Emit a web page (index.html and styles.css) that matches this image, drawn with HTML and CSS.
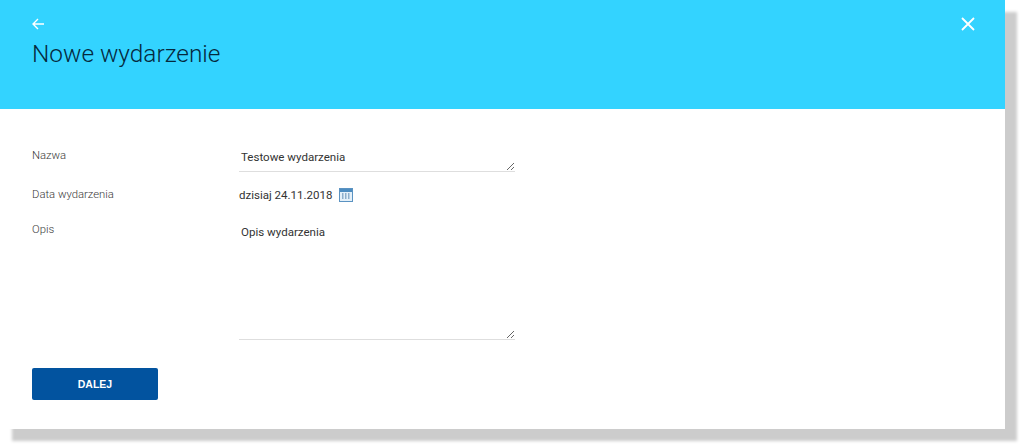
FILE: index.html
```html
<!DOCTYPE html>
<html lang="pl">
<head>
<meta charset="utf-8">
<title>Nowe wydarzenie</title>
<link rel="stylesheet" href="styles.css">
</head>
<body>
<main class="card">
  <header class="head">
    <div class="head-icons">
      <svg class="icon" width="14" height="14" viewBox="0 0 14 14"><path d="M13 7H2M7 2 2 7l5 5" fill="none" stroke="#fff" stroke-width="1.4"/></svg>
      <svg class="icon" width="14" height="14" viewBox="0 0 14 14"><path d="M1 1l12 12M13 1 1 13" fill="none" stroke="#fff" stroke-width="1.8"/></svg>
    </div>
    <h1 class="title">Nowe wydarzenie</h1>
  </header>
  <form class="form">
    <div class="row row-name">
      <label class="label">Nazwa</label>
      <textarea class="field field-name">Testowe wydarzenia</textarea>
    </div>
    <div class="row row-date">
      <label class="label">Data wydarzenia</label>
      <div class="date">
        <span>dzisiaj 24.11.2018</span>
        <svg width="14" height="14" viewBox="0 0 14 14"><rect x=".5" y=".5" width="13" height="13" fill="#e4f0f9" stroke="#5b93c2"/><rect x="1" y="1" width="12" height="3" fill="#4d8cc0"/><path d="M3 6h2M6 6h2M9 6h2M3 8h2M6 8h2M9 8h2M3 10h2M6 10h2M9 10h2" stroke="#3a6f9e" stroke-dasharray="1 .5"/></svg>
      </div>
    </div>
    <div class="row row-desc">
      <label class="label">Opis</label>
      <textarea class="field field-desc">Opis wydarzenia</textarea>
    </div>
    <button class="next" type="button">DALEJ</button>
  </form>
</main>
</body>
</html>
```
FILE: styles.css
```css
html, body { margin: 0; padding: 0; background: #fff; }
body { width: 1024px; height: 448px; overflow: hidden; font-family: Roboto, sans-serif; }
.card { width: 1005px; height: 429px; background: #fff; box-shadow: 12px 12px 3px #ccc; }
.head { height: 109px; background: #33d3ff; padding: 17px 30px 0 31px; box-sizing: border-box; }
.head-icons { display: flex; justify-content: space-between; height: 14px; }
.icon { display: block; }
.title { margin: 8px 0 0 1px; font-size: 24.4px; line-height: 30px; font-weight: 300; color: #05293d; }
.form { padding: 28px 0 0 32px; }
.row { display: flex; }
.label { width: 207px; flex: none; font-size: 11.3px; font-weight: 300; color: #3a3a3a; line-height: 20px; padding-top: 9px; box-sizing: border-box; }
.field { display: block; width: 276px; margin: 0; padding: 11px 2px 0; box-sizing: border-box; border: 0; border-bottom: 1px solid #dedede; outline: 0; font-family: Roboto, sans-serif; font-size: 11.55px; line-height: 18px; color: #333; background: #fff; }
.field-name { height: 35px; }
.row-date { margin-top: 13px; height: 22px; }
.row-date .label { padding-top: 0; }
.date { display: flex; align-items: center; gap: 6.5px; font-size: 11.5px; color: #333; height: 20px; }
.row-desc { margin-top: 13px; }
.row-desc .label { padding-top: 0; }
.field-desc { height: 120px; padding-top: 3px; }
.next { display: block; width: 126px; height: 32px; margin-top: 28px; padding: 0; border: 0; border-radius: 2px; background: #02539f; color: #fff; font-family: "Liberation Sans", sans-serif; font-size: 10.5px; font-weight: 700; }
```
